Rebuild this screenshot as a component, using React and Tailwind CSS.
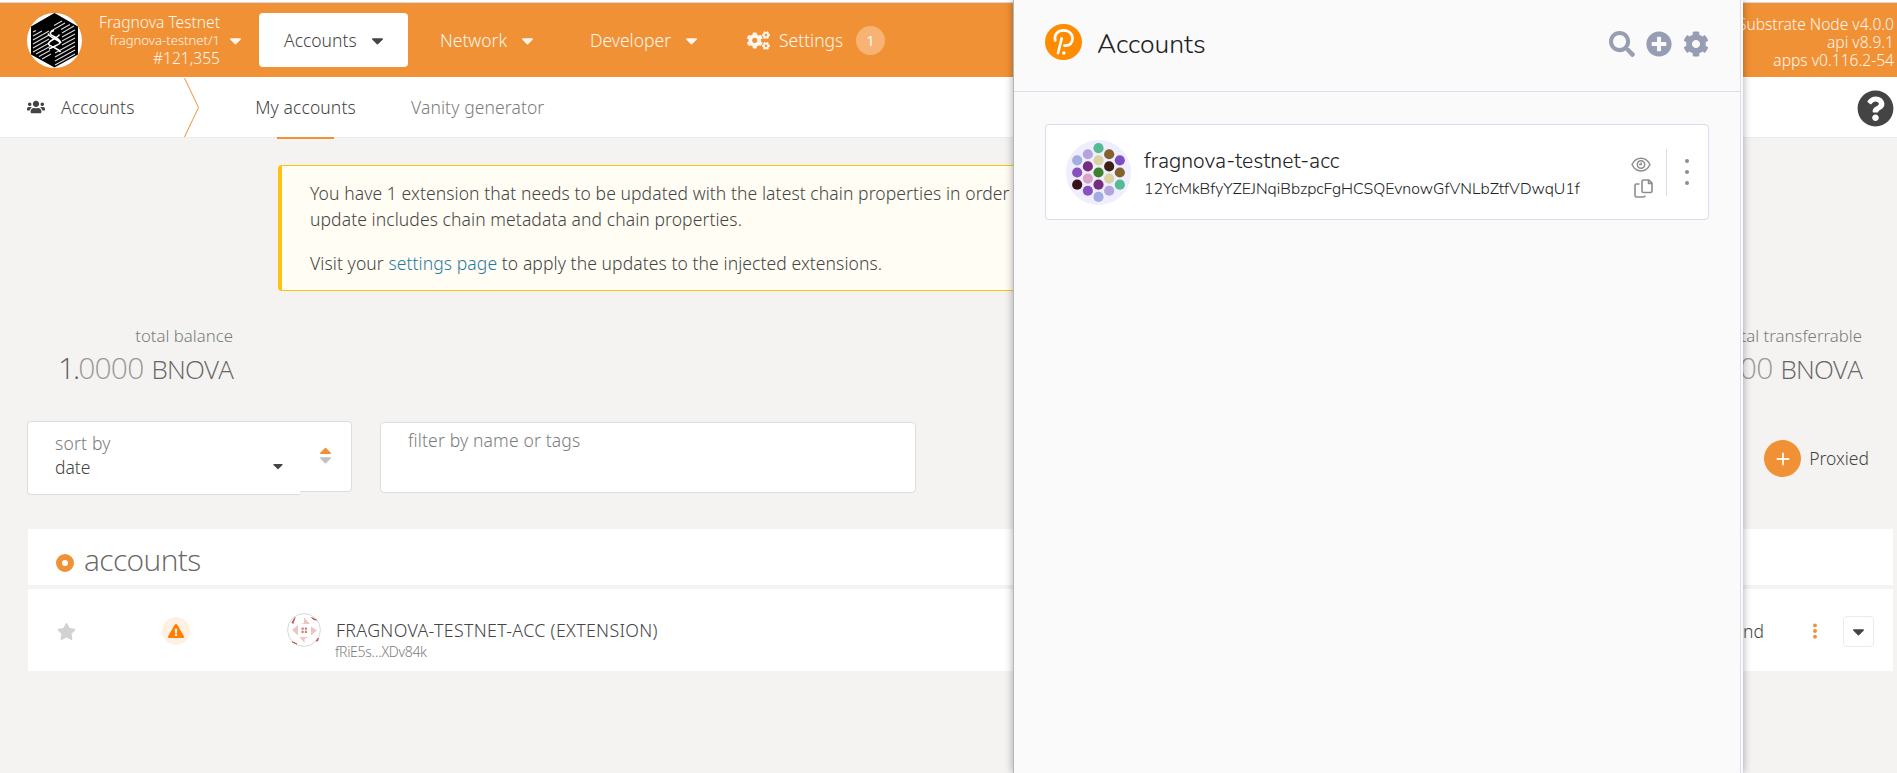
import React from 'react';
import { FaCaretDown, FaCaretUp, FaUsers, FaCogs, FaSearch, FaPlusCircle, FaCog, FaQuestionCircle, FaStar, FaExclamationTriangle } from 'react-icons/fa';
import { FaEllipsisVertical, FaPlus } from 'react-icons/fa6';

const dots = [
  [32, 8, '#56ba92'], [21.5, 14, '#b5a3dc'], [42.5, 14, '#82622d'], [11, 20, '#a3aede'], [32, 20, '#dcd1a0'], [53, 20, '#7c50bd'],
  [21.5, 26, '#762d7c'], [42.5, 26, '#3a2012'], [11, 32, '#8a50bd'], [32, 32, '#41812d'], [53, 32, '#82622d'],
  [21.5, 38, '#dca3c8'], [42.5, 38, '#dcd1a0'], [11, 44, '#381218'], [32, 44, '#762d7c'], [53, 44, '#56ba92'],
  [21.5, 50, '#8a50bd'], [42.5, 50, '#b5a3dc'], [32, 56, '#a3aede'],
];

function Logo() {
  return (
    <svg viewBox="0 0 55 55" className="h-[55px] w-[55px] shrink-0">
      <circle cx="27.5" cy="27.5" r="27.5" fill="#fff" />
      <path d="M27.5 0 51 13.5v28L27.5 54.5 4 41.5v-28z" fill="#000" />
      <path d="M27 12.500 35 8M24 18l14-8M6 19l3-1.500M6 23l9-5M6 27l16-9M6 31l16-9M34 16.500l9-5M35 20l12-7M6 35l16-9M35 24l13-7M6 39l17-9.500M35 28l13-7M9 41l14-7.500M12 43.500l11-6M35 32l13-7M15 46l9-5M28 40l20-11M28 44l20-11M28 48l20-11M28 52l20-11" stroke="#fff" strokeWidth="1.1" opacity=".85" />
      <path d="M27 17.500c-5 1.500-5 3.500 0 6s6 4 7 6.500M21 20.500c1 2.500 3 3.500 6 5s6 3.500 6 4.500-5 3-11 6M32.500 21.500c-1 2-4 3.500-6.500 5s-5 3-4.500 4.500 4 2.500 6.500 4 5 2.500 5.500 4" fill="none" stroke="#fff" strokeWidth="1.5" />
    </svg>
  );
}

function Polkadot() {
  return (
    <svg viewBox="0 0 37 36" className="h-9 w-[37px]">
      <ellipse cx="18.5" cy="18" rx="18.5" ry="18" fill="#ff8c00" />
      <path d="M10.200 16.500C8.800 10.500 13 6.300 18.500 6.300c5.800 0 9.300 4 9 8.700-.3 4.500-3.500 6.800-8 6.600M16.700 14.500 13 29" fill="none" stroke="#fff" strokeWidth="2.700" strokeLinecap="round" />
      <circle cx="18.800" cy="29" r="1.800" fill="#fff" />
    </svg>
  );
}

function AddressIcon() {
  return (
    <svg viewBox="0 0 34 34" className="h-[34px] w-[34px] shrink-0">
      <circle cx="17" cy="17" r="16.4" fill="#fff" stroke="#d8d8d8" strokeWidth="1" />
      <path d="M17 4.500 23 11h-9l3-1zM30 17.500l-6 5v-9zM17.500 30l-5-6h9l-4 2zM5 17l6-5v10.500z" fill="#ecc6c0" />
      <path d="M14.500 14.500h2.200v2.200h-2.200zM17.800 14.500H20v2.200h-2.200zM14.500 17.800h2.200V20h-2.200zM17.800 17.800H20V20h-2.200z" fill="#cf8072" />
      <path d="m5 9.500 3-5-2 6zM24.500 4.500l5 2.500-3-.5zM29 28l2.500-3-1 3zM5 28.500l5 2.500-3-1z" fill="#b5503f" stroke="#b5503f" strokeWidth=".8" />
    </svg>
  );
}

function EyeIcon() {
  return (
    <svg viewBox="0 0 20 15" className="h-[15px] w-5" fill="none" stroke="#8d8d8d" strokeWidth="1.5">
      <path d="M1 7.500C5 -1 15 -1 19 7.500 15 16 5 16 1 7.500z" />
      <circle cx="10" cy="7.500" r="3.700" />
      <path d="M8 7.500h2.200v-2" />
    </svg>
  );
}

function CopyIcon() {
  return (
    <svg viewBox="0 0 19 19" className="size-[19px]" fill="none" stroke="#8d8d8d" strokeWidth="1.6" strokeLinejoin="round">
      <path d="M9.500 1h5.500l3 3v8q0 1.500-1.500 1.500h-7Q8 13.500 8 12V2.500Q8 1 9.500 1zM14.500 1v3.500H18M5.500 5H2.500Q1 5 1 6.500v10Q1 18 2.500 18h7q1.500 0 1.500-1.500" />
    </svg>
  );
}

function Balance({ label }) {
  return (
    <div className="flex flex-col items-end font-['Open_Sans'] whitespace-nowrap">
      <div className="font-['Noto_Sans'] text-[16.8px] leading-6 text-[#7c7c7c]">{label}</div>
      <div className="flex items-baseline text-[30px] leading-[39px] font-light tracking-[-0.8px] text-[#9a9a9a]">
        <span className="tracking-[-2px] text-[#5e5e5e]">1.</span>0000
        <span className="ml-[8px] text-[26px] text-[#666]">BNOVA</span>
      </div>
    </div>
  );
}

function TopBar() {
  return (
    <header className="h-[77px] border-t-2 border-white bg-[#f19135] text-[#fff6ee]">
      <div className="flex h-[75px] items-start justify-between border-t border-[#d8d8e4]">
        <div className="flex h-[74px] items-center">
          <div className="ml-[27px]"><Logo /></div>
          <div className="ml-[10px] flex w-[128px] flex-col items-end text-[15.6px] leading-[18px]">
            <span>Fragnova Testnet</span>
            <span className="text-[13.1px]">fragnova-testnet/1</span>
            <span>#121,355</span>
          </div>
          <FaCaretDown className="ml-[6px] size-[19px]" />
          <nav className="ml-[14px] flex items-center text-[17.5px]">
            <div className="flex h-[54px] w-[149px] items-center rounded bg-white pt-px pl-[25px] text-[#444]">
              <span className="w-[74px]">Accounts</span><FaCaretDown className="ml-[10px] size-[19px]" />
            </div>
            <div className="ml-[32px] flex w-[150px] items-center pt-px"><span className="w-[69px]">Network</span><FaCaretDown className="ml-[9px] size-[19px]" /></div>
            <div className="flex w-[156px] items-center pt-px"><span className="w-[82px]">Developer</span><FaCaretDown className="ml-[10px] size-[19px]" /></div>
            <FaCogs className="ml-px size-[23px]" />
            <span className="ml-[9px] w-[65px] pt-px">Settings</span>
            <span className="ml-[12px] flex size-[29px] items-center justify-center rounded-full bg-[#f6b374] text-[15px] font-normal">1</span>
          </nav>
        </div>
        <div className="flex h-[74px] flex-col items-end justify-center pt-1 pr-[3px] text-[15.6px] leading-[18px]">
          <span>Substrate Node v4.0.0</span><span>api v8.9.1</span><span>apps v0.116.2-54</span>
        </div>
      </div>
    </header>
  );
}

function TabBar() {
  return (
    <div className="flex h-[61px] border-b border-[#ebebeb] bg-white text-[17.5px]">
      <div className="flex h-[60px] w-[184px] items-center pl-[27px]"><FaUsers className="size-[18px]" /><span className="ml-4 tracking-[0.1px]">Accounts</span></div>
      <svg viewBox="0 0 16 60" className="h-[60px] w-4" fill="none" stroke="#f19135"><path d="M.5 1 14.500 30.500.5 60" /></svg>
      <div className="ml-[55px] flex w-[101px] flex-col items-center">
        <span className="h-[60px] shrink-0 leading-[61px] tracking-[0.1px] whitespace-nowrap">My accounts</span>
        <div className="h-[2px] w-[57px] shrink-0 bg-[#f19135]" />
      </div>
      <span className="ml-[55px] leading-[61px] tracking-[0.1px] text-[#7c7c7c]">Vanity generator</span>
      <FaQuestionCircle className="mt-[13px] mr-[3px] ml-auto size-[37px]" />
    </div>
  );
}

function ExtensionPanel() {
  return (
    <aside className="absolute top-0 left-[1013px] h-[773px] w-[730px] border-l border-[#b6b6bc] bg-[#fafafa] pr-[2px] font-[Nunito,Lato,sans-serif] shadow-[0_0_8px_rgba(0,0,0,.35)]">
      <div className="h-full border-r border-[#dcdcec]">
        <div className="flex h-[92px] items-center border-b border-[#dcdcec] pr-[31px] pl-[31px]">
          <div className="-mt-2"><Polkadot /></div>
          <h1 className="ml-[15px] pb-px text-[26.6px] font-[350] text-[#222]">Accounts</h1>
          <div className="ml-auto flex items-center gap-[11px] pb-1 text-[#979eb4]">
            <FaSearch className="size-[26px]" /><FaPlusCircle className="size-[26px]" /><FaCog className="size-[26px]" />
          </div>
        </div>
        <div className="mt-8 ml-[31px] flex h-[96px] w-[664px] items-center rounded border border-[#dcdcec] bg-white pl-5">
          <svg viewBox="0 0 64 64" className="size-[65px] shrink-0">
            <circle cx="32" cy="32" r="32" fill="#eeeeff" />
            {dots.map(([x, y, c], i) => <circle key={i} cx={x} cy={y} r="5" fill={c} />)}
          </svg>
          <div className="mt-[5px] ml-[13px] w-[470px] shrink-0 font-[350] whitespace-nowrap text-[#222]">
            <div className="text-[21.2px] leading-7">fragnova-testnet-acc</div>
            <div className="text-[15.88px] leading-7">12YcMkBfyYZEJNqiBbzpcFgHCSQEvnowGfVNLbZtfVDwqU1f</div>
          </div>
          <div className="ml-[17px] flex w-[23px] flex-col gap-[7px] pt-[10px]"><EyeIcon /><div className="ml-[3px]"><CopyIcon /></div></div>
          <div className="ml-[12px] h-[47px] w-px bg-[#dcdcec]" />
          <div className="ml-[18px] flex flex-col gap-[7px]">{[0, 1, 2].map(i => <i key={i} className="size-1 rounded-full bg-[#8d8d8d]" />)}</div>
        </div>
      </div>
    </aside>
  );
}

export default function App() {
  return (
    <div className="relative h-[773px] w-[1897px] overflow-hidden bg-[#f4f3f1] font-['Noto_Sans',sans-serif] font-[350] text-[#444]">
      <TopBar />
      <TabBar />
      <main className="pt-[27px]">
        <div className="ml-[278px] flex h-[126px] w-[1340px] flex-col rounded border border-l-4 border-[#ffc20e] bg-[#fffdf4] pt-[14px] pl-7 text-[17.5px] leading-[26px] tracking-[0.09px] whitespace-nowrap">
          <p>You have 1 extension that needs to be updated with the latest chain properties in order</p>
          <p>update includes chain metadata and chain properties.</p>
          <p className="mt-[18px]">Visit your <a className="text-[#1f7ba3]">settings page</a> to apply the updates to the injected extensions.</p>
        </div>
        <div className="mt-[33px] flex h-[66px] justify-between pr-[35px]">
          <div className="flex w-[233px] justify-end"><Balance label="total balance" /></div>
          <Balance label="total transferrable" />
        </div>
        <div className="mt-[31px] flex h-[74px] items-start pr-[28px] pl-[27px] text-[17.5px]">
          <div className="flex h-[74px] w-[273px] items-end rounded-l border border-r-0 border-[#dddddd] bg-white pb-[15px] pl-[27px] leading-6">
            <div><div className="tracking-[0.2px] text-[#7c7c7c]">sort by</div><div>date</div></div>
            <FaCaretDown className="mr-[14px] mb-[5px] ml-auto size-4" />
          </div>
          <div className="flex h-[71px] w-[52px] flex-col items-center justify-center rounded-r border border-l-0 border-[#dddddd] bg-white">
            <FaCaretUp className="-mb-[10px] size-[19px] text-[#f19135]" />
            <FaCaretDown className="mb-1 size-[19px] text-[#c0c0c0]" />
          </div>
          <div className="mt-px ml-[28px] h-[71px] w-[536px] rounded border border-[#dddddd] bg-white pt-[5px] pl-[27px] leading-6 tracking-[0.15px] text-[#7c7c7c]">filter by name or tags</div>
          <div className="mt-[19px] ml-auto flex items-center">
            <span className="flex size-[37px] items-center justify-center rounded-full bg-[#f19135] text-[#fff1e4]"><FaPlus className="size-4" /></span>
            <span className="ml-[8px]">Proxied</span>
          </div>
        </div>
        <section className="mt-[34px] mr-1 ml-[28px]">
          <div className="flex h-[56px] items-center bg-white pl-7">
            <span className="mt-[12px] size-[18px] rounded-full border-6 border-[#f19135]" />
            <h2 className="ml-[10px] pt-[5px] font-['Open_Sans'] text-[30px] font-light tracking-[-0.6px] text-[#666]">accounts</h2>
          </div>
          <div className="mt-1 flex h-[82px] items-center bg-white text-[17px]">
            <FaStar className="mt-[2px] ml-[29px] size-[19px] text-[#d2d2d2]" />
            <span className="mt-[2px] ml-[86px] flex size-7 items-center justify-center rounded-full bg-[#fff0e4]"><FaExclamationTriangle className="size-4 text-[#ff7d01]" /></span>
            <div className="ml-[97px]"><AddressIcon /></div>
            <div className="mt-[22px] ml-[14px] leading-[22px]">
              <div className="pl-px text-[17.8px] tracking-[0.34px]">FRAGNOVA-TESTNET-ACC (EXTENSION)</div>
              <div className="text-[14px] tracking-[-0.3px] text-[#7c7c7c]">fRiE5s…XDv84k</div>
            </div>
            <span className="mt-[2px] ml-auto text-[17.5px]">send</span>
            <FaEllipsisVertical className="mt-[2px] ml-[42px] size-[18px] text-[#f19135]" />
            <span className="mt-[2px] mr-[19px] ml-[19px] flex size-[31px] items-center justify-center rounded border border-[#ebebeb]"><FaCaretDown className="size-[19px]" /></span>
          </div>
        </section>
      </main>
      <ExtensionPanel />
    </div>
  );
}
